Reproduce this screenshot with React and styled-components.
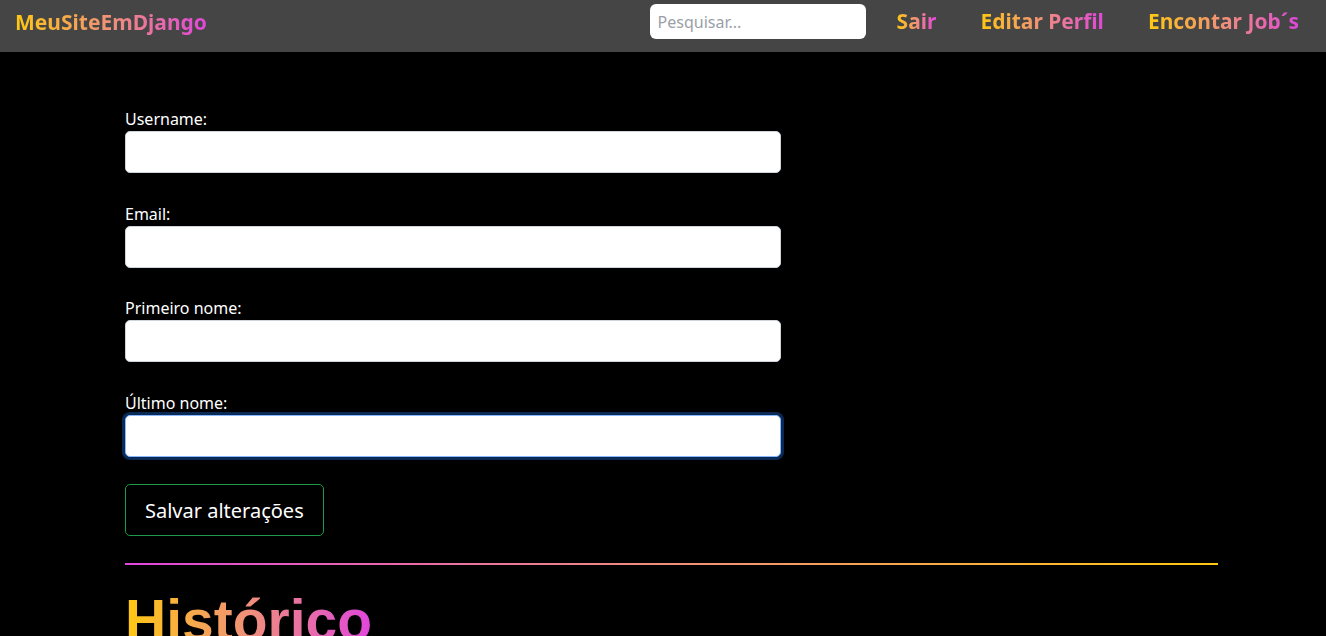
import React from "react";
import styled, { createGlobalStyle } from "styled-components";

const GlobalStyle = createGlobalStyle`
  html, body { margin: 0; padding: 0; background: #000; }
  body { font-family: "Noto Sans", "Open Sans", sans-serif; color: #fff; }
  * { box-sizing: border-box; }
`;

const gradient = "linear-gradient(90deg, #ffc812 0%, #f0907a 50%, #e046dc 100%)";

const Nav = styled.nav`
  height: 52px;
  background: #454545;
  display: flex;
  align-items: center;
  padding: 0 27px 0 15px;
`;

const GradText = styled.span`
  background: ${gradient};
  -webkit-background-clip: text;
  background-clip: text;
  color: transparent;
  font-weight: 700;
  font-size: ${(p) => p.$size || "21px"};
  white-space: nowrap;
`;

const Brand = styled.a`
  display: inline-flex;
  margin-top: -8px;
`;

const Spacer = styled.div`
  flex: 1;
`;

const Search = styled.input`
  width: 216px;
  height: 35px;
  margin-top: -9px;
  border: none;
  border-radius: 6px;
  padding: 0 8px;
  font-family: inherit;
  font-size: 16px;
  &::placeholder { color: #9aa0a8; }
`;

const Links = styled.div`
  display: flex;
  gap: 44px;
  margin-left: 31px;
  margin-top: -10px;
`;

const Main = styled.main`
  padding: 55px 108px 0 125px;
`;

const Form = styled.form`
  display: flex;
  flex-direction: column;
  width: 656px;
`;

const Field = styled.div`
  display: flex;
  flex-direction: column;
  margin-bottom: 28.5px;
`;

const Label = styled.label`
  font-size: 16px;
  line-height: 24px;
`;

const Input = styled.input`
  height: 42px;
  border: 1px solid #ced4da;
  border-radius: 5px;
  background: #fff;
  font-family: inherit;
  font-size: 16px;
  padding: 0 12px;
  ${(p) =>
    p.$focus &&
    `
    border-color: #86b7fe;
    box-shadow: 0 0 0 3px #0a2a55;
    outline: none;
  `}
`;

const Button = styled.button`
  align-self: flex-start;
  height: 52px;
  padding: 0 19px;
  margin-top: -1px;
  background: transparent;
  border: 1px solid #1f9a4a;
  border-radius: 5px;
  color: #fff;
  font-family: inherit;
  font-size: 20px;
`;

const Rule = styled.div`
  height: 2px;
  margin-top: 27px;
  width: 1093px;
  background: linear-gradient(90deg, #e046dc 0%, #f0907a 50%, #ffc812 100%);
`;

const Heading = styled.h1`
  margin: 22px 0 0;
  font-family: "Liberation Sans", Arial, sans-serif;
  font-size: 57px;
  font-weight: 700;
  line-height: 67px;
  display: inline-block;
  background: ${gradient};
  -webkit-background-clip: text;
  background-clip: text;
  color: transparent;
`;

const fields = [
  { label: "Username:" },
  { label: "Email:" },
  { label: "Primeiro nome:" },
  { label: "Último nome:", focus: true },
];

export default function App() {
  return (
    <>
      <GlobalStyle />
      <Nav>
        <Brand>
          <GradText $size="21px">MeuSiteEmDjango</GradText>
        </Brand>
        <Spacer />
        <Search placeholder="Pesquisar..." />
        <Links>
          <GradText>Sair</GradText>
          <GradText>Editar Perfil</GradText>
          <GradText>Encontar Job´s</GradText>
        </Links>
      </Nav>
      <Main>
        <Form onSubmit={(e) => e.preventDefault()}>
          {fields.map((f) => (
            <Field key={f.label}>
              <Label>{f.label}</Label>
              <Input $focus={f.focus} />
            </Field>
          ))}
          <Button type="submit">Salvar alterações</Button>
        </Form>
        <Rule />
        <div>
          <Heading>Histórico</Heading>
        </div>
      </Main>
    </>
  );
}
